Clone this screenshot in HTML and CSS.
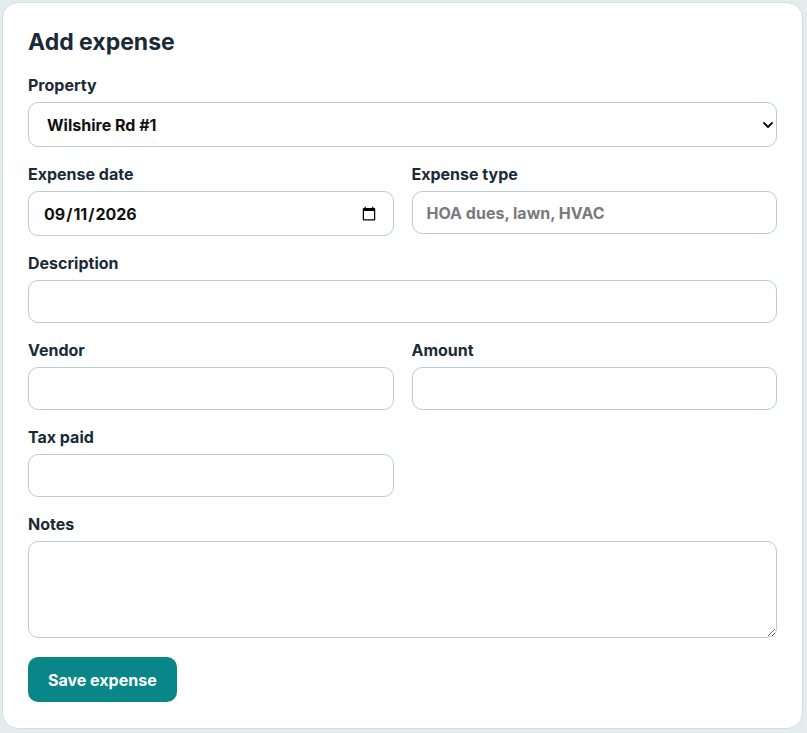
FILE: index.html
```html
<!DOCTYPE html>
<html lang="en">
<head>
    <meta charset="UTF-8">
    <meta name="viewport" content="width=device-width, initial-scale=1.0">
    <title>Add expense</title>
    <link rel="stylesheet" href="styles.css">
</head>
<body>
    <div class="card">
        <h2>Add expense</h2>

        <form class="expense-form" onsubmit="return false;">
            <div class="field">
                <label for="property">Property</label>
                <div class="select-wrap">
                    <select id="property">
                        <option>Wilshire Rd #1</option>
                    </select>
                    <svg class="chevron" width="10" height="6" viewBox="0 0 10 6">
                        <path d="M1 1l4 4 4-4" fill="none" stroke="#111" stroke-width="1.8" stroke-linecap="round" stroke-linejoin="round"/>
                    </svg>
                </div>
            </div>

            <div class="row">
                <div class="field">
                    <label for="expense-date">Expense date</label>
                    <input type="date" id="expense-date" value="2026-09-11">
                </div>
                <div class="field">
                    <label for="expense-type">Expense type</label>
                    <input type="text" id="expense-type" placeholder="HOA dues, lawn, HVAC">
                </div>
            </div>

            <div class="field">
                <label for="description">Description</label>
                <input type="text" id="description">
            </div>

            <div class="row">
                <div class="field">
                    <label for="vendor">Vendor</label>
                    <input type="text" id="vendor">
                </div>
                <div class="field">
                    <label for="amount">Amount</label>
                    <input type="text" id="amount">
                </div>
            </div>

            <div class="row">
                <div class="field">
                    <label for="tax-paid">Tax paid</label>
                    <input type="text" id="tax-paid">
                </div>
            </div>

            <div class="field notes">
                <label for="notes">Notes</label>
                <textarea id="notes"></textarea>
            </div>

            <button type="submit">Save expense</button>
        </form>
    </div>
</body>
</html>
```

FILE: styles.css
```css
body {
    font-family: Inter, 'Liberation Sans', sans-serif;
    margin: 0;
    padding: 2px 0 0 2px;
    background-color: #e4eced;
}

.card {
    width: 801px;
    box-sizing: border-box;
    background-color: white;
    border: 1px solid #cfdfe2;
    border-radius: 16px;
    padding: 25px 25px 26px;
}

h2 {
    margin: 0 0 20px;
    font-size: 23px;
    line-height: 28px;
    font-weight: 700;
    color: #1a2a37;
}

.row {
    display: grid;
    grid-template-columns: 1fr 1fr;
    gap: 18px;
}

.field {
    display: flex;
    flex-direction: column;
    gap: 7px;
    margin-bottom: 18px;
}

.field.notes {
    margin-bottom: 19px;
}

label {
    font-size: 16px;
    line-height: 19px;
    font-weight: 700;
    color: #1a2a37;
}

input, select, textarea {
    font-family: inherit;
    font-size: 16px;
    font-weight: 700;
    color: #111;
    height: 43px;
    padding: 0 14px;
    border: 1px solid #b9ced4;
    border-radius: 10px;
    background-color: white;
    box-sizing: border-box;
    width: 100%;
    margin: 0;
}

input[type="date"] {
    height: 45px;
}

input::placeholder {
    color: #7a7a7a;
}

.select-wrap {
    position: relative;
}

select {
    appearance: none;
    height: 45px;
    padding: 0 18px;
}

.chevron {
    position: absolute;
    right: 4px;
    top: 20px;
    pointer-events: none;
}

textarea {
    height: 97px;
    padding: 12px 14px;
    resize: vertical;
}

button {
    font-family: inherit;
    background-color: #088688;
    color: white;
    font-size: 16px;
    font-weight: 700;
    height: 45px;
    padding: 0 20px;
    border: none;
    border-radius: 10px;
    cursor: pointer;
}

button:hover {
    background-color: #066f71;
}
```
